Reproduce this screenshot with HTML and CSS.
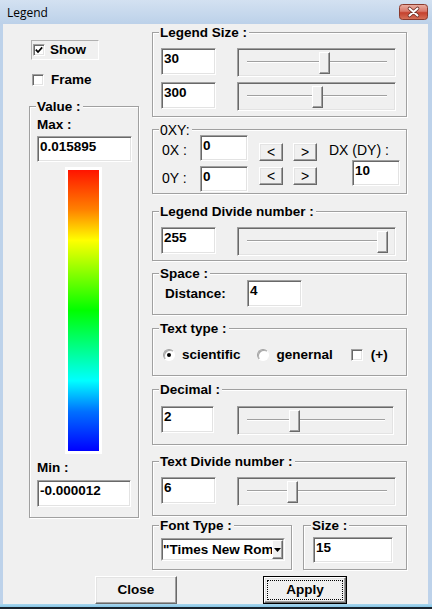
FILE: index.html
```html
<!DOCTYPE html>
<html>
<head>
<meta charset="utf-8">
<link rel="stylesheet" href="styles.css">
</head>
<body>
<div class="window">
  <div class="titlebar">
    <span class="title">Legend</span>
    <div class="tclose">
      <svg width="29" height="16" viewBox="0 0 29 16">
        <defs>
          <linearGradient id="rg" x1="0" y1="0" x2="0" y2="1">
            <stop offset="0" stop-color="#eab1a4"/>
            <stop offset="0.45" stop-color="#d9786a"/>
            <stop offset="0.55" stop-color="#c5412e"/>
            <stop offset="1" stop-color="#d6735a"/>
          </linearGradient>
        </defs>
        <rect x="0.5" y="0.5" width="28" height="15" rx="3" fill="url(#rg)" stroke="#8a3a2d"/>
        <path d="M10.5 4.5 L18.5 11.5 M18.5 4.5 L10.5 11.5" stroke="#6a2d24" stroke-width="3.6" stroke-linecap="round"/>
        <path d="M10.5 4.5 L18.5 11.5 M18.5 4.5 L10.5 11.5" stroke="#ffffff" stroke-width="2" stroke-linecap="round"/>
      </svg>
    </div>
  </div>
  <div class="client ui">
    <div class="columns">
      <div class="left">
        <div class="showbox">
          <span class="chk"><svg width="8" height="8" viewBox="0 0 8 8"><path d="M0.8 3.6 L3 6 L7.2 1.4" fill="none" stroke="#000" stroke-width="1.7"/></svg></span>
          <span class="show-txt">Show</span>
        </div>
        <div class="framerow">
          <span class="chk"></span>
          <span class="frame-txt">Frame</span>
        </div>
        <div class="group value">
          <div class="cap">Value :</div>
          <div class="lbl maxlbl">Max :</div>
          <div class="edit maxedit">0.015895</div>
          <div class="colorbar"><div class="grad"></div></div>
          <div class="lbl minlbl">Min :</div>
          <div class="edit minedit">-0.000012</div>
        </div>
      </div>

      <div class="right">
        <div class="group g-size">
          <div class="cap">Legend Size :</div>
          <div class="srow">
            <div class="edit e55">30</div>
            <div class="slider s159"><div class="groove"></div><div class="thumb" style="left:81px"></div></div>
          </div>
          <div class="srow srow2">
            <div class="edit e55">300</div>
            <div class="slider s159"><div class="groove"></div><div class="thumb" style="left:74px"></div></div>
          </div>
        </div>

        <div class="group g-oxy">
          <div class="cap thin oxycap">0XY:</div>
          <div class="oxy">
            <div class="olbl ol1">0X :</div>
            <div class="edit oedit">0</div>
            <div class="pbtn pb1">&lt;</div>
            <div class="pbtn pb1">&gt;</div>
            <div class="dxcol">
              <div class="olbl dxlbl">DX (DY) :</div>
              <div class="edit dxedit">10</div>
            </div>
            <div class="olbl ol2">0Y :</div>
            <div class="edit oedit">0</div>
            <div class="pbtn pb2">&lt;</div>
            <div class="pbtn pb2">&gt;</div>
          </div>
        </div>

        <div class="group g-div">
          <div class="cap">Legend Divide number :</div>
          <div class="srow">
            <div class="edit e55">255</div>
            <div class="slider s159"><div class="groove"></div><div class="thumb" style="left:139px"></div></div>
          </div>
        </div>

        <div class="group g-space">
          <div class="cap spacecap">Space :</div>
          <div class="sprow">
            <span class="dist">Distance:</span>
            <div class="edit e55">4</div>
          </div>
        </div>

        <div class="group g-text">
          <div class="cap">Text type :</div>
          <div class="trow">
            <span class="radio"><span class="dot"></span></span>
            <span class="rt1">scientific</span>
            <span class="radio radio2"></span>
            <span class="rt2">genernal</span>
            <span class="chk c3"></span>
            <span class="rt3">(+)</span>
          </div>
        </div>

        <div class="group g-dec">
          <div class="cap">Decimal :</div>
          <div class="srow">
            <div class="edit e53">2</div>
            <div class="slider s157"><div class="groove"></div><div class="thumb" style="left:51px"></div></div>
          </div>
        </div>

        <div class="group g-tdiv">
          <div class="cap">Text Divide number :</div>
          <div class="srow">
            <div class="edit e55">6</div>
            <div class="slider s159"><div class="groove"></div><div class="thumb" style="left:49px"></div></div>
          </div>
        </div>

        <div class="frow">
          <div class="group g-font">
            <div class="cap">Font Type :</div>
            <div class="combo">
              <div class="combo-in">
                <span class="combo-text">"Times New Roman</span>
                <span class="combo-btn"><svg width="7" height="4" viewBox="0 0 7 4"><path d="M0 0 H7 L3.5 4 Z" fill="#000"/></svg></span>
              </div>
            </div>
          </div>
          <div class="group g-sz">
            <div class="cap">Size :</div>
            <div class="edit szedit">15</div>
          </div>
        </div>
      </div>
    </div>

    <div class="btnrow">
      <div class="btn closebtn"><div class="face">Close</div></div>
      <div class="btn applybtn"><div class="face"><span class="focus">Apply</span></div></div>
    </div>
  </div>
  <div class="bottomband"></div>
</div>
</body>
</html>
```

FILE: styles.css
```css
* { box-sizing: border-box; }

body {
  margin: 0;
  background: #ffffff;
}

.window {
  width: 432px;
  height: 609px;
  background: #bdd2ea;
  display: flex;
  flex-direction: column;
  overflow: hidden;
}

.titlebar {
  flex: none;
  height: 24px;
  display: flex;
  justify-content: space-between;
  align-items: flex-start;
  background: linear-gradient(#d3e1f1, #bcd1e9);
}

.title {
  font: 12px/17px "Open Sans", "Noto Sans", sans-serif;
  color: #000;
  margin: 4px 0 0 7px;
}

.tclose {
  margin: 4px 4px 0 0;
  width: 29px;
  height: 16px;
  display: flex;
}

.client {
  flex: none;
  height: 580px;
  margin: 0 4px 0 3px;
  background: #f0f0f0;
}

.bottomband {
  flex: none;
  height: 5px;
  background: linear-gradient(#a9d6ee 0, #86c6e6 3px, #18222c 3px);
}

.ui {
  font: bold 13.5px/14px "Liberation Sans", Arial, sans-serif;
  color: #000;
}

.columns {
  display: flex;
  align-items: flex-start;
  padding: 8px 0 0 26px;
}

.left {
  width: 110px;
  display: flex;
  flex-direction: column;
  align-items: flex-start;
}

.right {
  width: 255px;
  margin-left: 13px;
  display: flex;
  flex-direction: column;
}

/* checkboxes */
.chk {
  width: 12px;
  height: 12px;
  flex: none;
  display: flex;
  align-items: center;
  justify-content: center;
  background: #fff;
  border: 1px solid;
  border-color: #a0a0a0 #ffffff #ffffff #a0a0a0;
  box-shadow: inset 1px 1px 0 #696969, inset -1px -1px 0 #e3e3e3;
}

.showbox {
  margin: 8px 0 0 2px;
  width: 68px;
  height: 20px;
  display: flex;
  align-items: center;
  padding-left: 1px;
  border: 1px solid;
  border-color: #b0b0b0 #ffffff #ffffff #b0b0b0;
}

.show-txt { margin-left: 5px; }

.framerow {
  margin: 13px 0 0 3px;
  height: 14px;
  display: flex;
  align-items: center;
}

.frame-txt { margin-left: 7px; }

/* group boxes */
.group {
  border: 1px solid #a0a0a0;
  box-shadow: inset 1px 1px 0 #ffffff, 1px 1px 0 #ffffff;
}

.cap {
  width: fit-content;
  height: 14px;
  margin: -7px 0 0 6px;
  padding: 0 2px 0 1px;
  background: #f0f0f0;
  white-space: nowrap;
}

.thin {
  font-weight: normal;
  font-size: 14px;
}

.value {
  width: 110px;
  margin-top: 19px;
  padding-bottom: 10px;
}

.lbl { margin-left: 7px; }
.maxlbl { margin-top: 4px; }
.minlbl { margin-top: 7px; }

/* edit boxes */
.edit {
  background: #fff;
  border: 1px solid;
  border-color: #a0a0a0 #ffffff #ffffff #a0a0a0;
  box-shadow: inset 1px 1px 0 #696969, inset -1px -1px 0 #e3e3e3;
  padding: 3px 0 0 2px;
  white-space: nowrap;
  overflow: hidden;
  flex: none;
}

.maxedit {
  margin: 4px 0 0 7px;
  width: 95px;
  height: 26px;
}

.minedit {
  margin: 5px 0 0 7px;
  width: 94px;
  height: 27px;
}

.colorbar {
  margin: 5px 0 0 35px;
  width: 37px;
  height: 287px;
  padding: 3px;
  background: #fff;
}

.grad {
  height: 100%;
  background: linear-gradient(#ff1400 0%, #ff8000 14%, #ffff00 25%, #00ff00 50%, #00ffff 75%, #0070ff 86%, #0000ff 100%);
}

.e55 { width: 55px; height: 27px; }
.e53 { width: 53px; height: 27px; }

/* slider rows */
.srow {
  display: flex;
  align-items: flex-start;
  margin-top: 8px;
  padding-left: 8px;
  height: 29px;
}

.srow2 { margin-top: 5px; }

.slider {
  position: relative;
  height: 29px;
  margin-left: 21px;
  border: 1px solid;
  border-color: #a0a0a0 #ffffff #ffffff #a0a0a0;
  box-shadow: inset 1px 1px 0 #696969, inset -1px -1px 0 #e3e3e3;
}

.s159 { width: 159px; }
.s157 { width: 157px; margin-left: 23px; }

.groove {
  margin: 12px 8px 0 9px;
  height: 2px;
  border-top: 1px solid #a0a0a0;
  border-bottom: 1px solid #ffffff;
}

.thumb {
  position: absolute;
  top: 3px;
  width: 11px;
  height: 22px;
  background: #f0f0f0;
  border: 1px solid;
  border-color: #ffffff #696969 #696969 #ffffff;
  box-shadow: inset -1px -1px 0 #a0a0a0;
}

.g-size { padding-bottom: 5px; }

/* OXY */
.g-oxy {
  margin-top: 12px;
  padding: 0 0 1px 9px;
}

.oxycap { margin-left: -3px; margin-bottom: -3px; }

.oxy {
  margin-top: 1px;
  display: grid;
  grid-template-columns: 38px 48px 35px 34px auto;
  grid-template-rows: 26px 26px;
  row-gap: 5px;
  font-weight: normal;
}

.olbl {
  font-size: 14px;
  white-space: nowrap;
  align-self: start;
}

.ol1 { margin-top: 8px; }
.ol2 { margin-top: 5px; }

.oedit {
  width: 48px;
  height: 26px;
  font-weight: bold;
}

.pbtn {
  justify-self: end;
  align-self: start;
  width: 24px;
  height: 18px;
  display: flex;
  align-items: center;
  justify-content: center;
  font-size: 14px;
  background: #f0f0f0;
  border: 1px solid;
  border-color: #ffffff #696969 #696969 #ffffff;
  box-shadow: inset -1px -1px 0 #a0a0a0, inset 1px 1px 0 #e3e3e3;
}

.pb1 { margin-top: 8px; }
.pb2 { margin-top: 1px; }

.dxcol {
  grid-column: 5;
  grid-row: 1 / span 2;
  padding-left: 12px;
  display: flex;
  flex-direction: column;
  align-items: flex-start;
}

.dxlbl { margin-top: 8px; }

.dxedit {
  margin: 3px 0 0 23px;
  width: 48px;
  height: 26px;
  font-weight: bold;
}

/* divide */
.g-div {
  margin-top: 17px;
  padding-bottom: 4px;
}

/* space */
.g-space {
  margin-top: 12px;
  padding: 0 0 7px 0;
}

.spacecap { margin-bottom: -2px; }

.sprow {
  margin-top: 1px;
  padding-left: 12px;
  display: flex;
  align-items: center;
}

.dist { width: 82px; flex: none; }

/* text type */
.g-text {
  margin-top: 13px;
  padding-bottom: 13px;
}

.trow {
  margin-top: 12px;
  padding-left: 10px;
  height: 14px;
  display: flex;
  align-items: center;
  white-space: nowrap;
}

.radio {
  width: 12px;
  height: 12px;
  flex: none;
  border-radius: 50%;
  background: #fff;
  border: 1px solid;
  border-color: #a0a0a0 #ffffff #ffffff #a0a0a0;
  box-shadow: inset 1px 1px 0 #a8a8a8;
  display: flex;
  align-items: center;
  justify-content: center;
}

.dot {
  width: 4px;
  height: 4px;
  border-radius: 50%;
  background: #000;
}

.rt1 { margin-left: 7px; }
.radio2 { margin-left: 16px; }
.rt2 { margin-left: 8px; }
.c3 { margin-left: 18px; }
.rt3 { margin-left: 8px; }

/* decimal */
.g-dec {
  margin-top: 13px;
  padding-bottom: 9px;
}

.g-dec .srow { margin-top: 9px; }

/* text divide */
.g-tdiv {
  margin-top: 16px;
  padding-bottom: 9px;
}

/* font / size */
.frow {
  display: flex;
  margin-top: 9px;
}

.g-font {
  width: 140px;
  height: 45px;
  padding-left: 8px;
}

.g-font .cap { margin-left: -2px; }

.combo {
  margin-top: 5px;
  width: 124px;
  height: 23px;
  border: 1px solid;
  border-color: #a0a0a0 #ffffff #ffffff #a0a0a0;
}

.combo-in {
  height: 100%;
  display: flex;
  background: #fff;
  border: 1px solid;
  border-color: #696969 #e3e3e3 #e3e3e3 #696969;
}

.combo-text {
  flex: 1;
  min-width: 0;
  overflow: hidden;
  white-space: nowrap;
  line-height: 19px;
}

.combo-btn {
  flex: none;
  width: 11px;
  display: flex;
  align-items: center;
  justify-content: center;
  background: #f0f0f0;
  border: 1px solid;
  border-color: #ffffff #696969 #696969 #ffffff;
  box-shadow: inset -1px -1px 0 #a0a0a0;
}

.g-sz {
  width: 104px;
  height: 45px;
  margin-left: 11px;
  padding-left: 9px;
}

.g-sz .cap { margin-left: -2px; }

.szedit {
  margin-top: 4px;
  width: 80px;
  height: 26px;
}

/* bottom buttons */
.btnrow {
  display: flex;
  margin-top: 6px;
  padding-left: 92px;
}

.btn {
  height: 28px;
  display: flex;
}

.closebtn { width: 82px; }

.applybtn {
  width: 84px;
  margin-left: 86px;
  border: 1px solid #000;
}

.face {
  flex: 1;
  display: flex;
  align-items: center;
  justify-content: center;
  background: #f0f0f0;
  border: 1px solid;
  border-color: #ffffff #696969 #696969 #ffffff;
  box-shadow: inset -1px -1px 0 #a0a0a0, inset 1px 1px 0 #e3e3e3;
}

.applybtn .face { padding: 2px; }

.focus {
  flex: 1;
  align-self: stretch;
  display: flex;
  align-items: center;
  justify-content: center;
  border: 1px dotted #000;
}
```
